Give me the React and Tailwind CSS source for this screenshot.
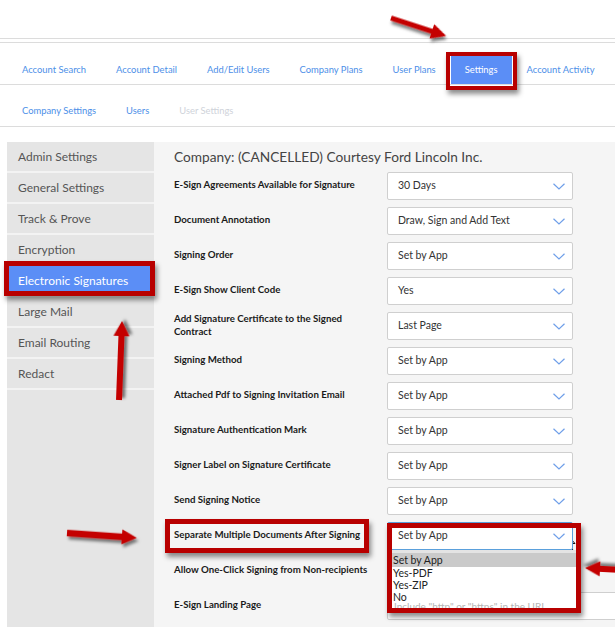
import React from 'react';

const tabs = ['Account Search', 'Account Detail', 'Add/Edit Users', 'Company Plans', 'User Plans', 'Settings', 'Account Activity'];

const sideItems = ['Admin Settings', 'General Settings', 'Track & Prove', 'Encryption', 'Electronic Signatures', 'Large Mail', 'Email Routing', 'Redact'];

const rows = [
    { label: 'E-Sign Agreements Available for Signature', value: '30 Days' },
    { label: 'Document Annotation', value: 'Draw, Sign and Add Text' },
    { label: 'Signing Order', value: 'Set by App' },
    { label: 'E-Sign Show Client Code', value: 'Yes' },
    { label: 'Add Signature Certificate to the Signed Contract', value: 'Last Page' },
    { label: 'Signing Method', value: 'Set by App' },
    { label: 'Attached Pdf to Signing Invitation Email', value: 'Set by App' },
    { label: 'Signature Authentication Mark', value: 'Set by App' },
    { label: 'Signer Label on Signature Certificate', value: 'Set by App' },
    { label: 'Send Signing Notice', value: 'Set by App' },
];

const Chevron = () => (
    <svg width="12" height="7" viewBox="0 0 12 7" fill="none">
        <path d="M0.5 0.8 L6 6 L11.5 0.8" stroke="#6f9fe9" strokeWidth="1.2" />
    </svg>
);

const SelectBox = ({ value, focused }) => (
    <div className={`w-[186px] h-[28px] shrink-0 bg-white rounded-[2px] border pl-[10px] pr-[7px] flex items-center justify-between text-[10.5px] text-[#333] ${focused ? 'border-[#5aa0dc]' : 'border-[#cfcfcf]'}`}>
        <span>{value}</span>
        <Chevron />
    </div>
);

const Label = ({ children }) => (
    <div className="w-[213px] shrink-0 pr-[12px] pb-[3px] text-[9.7px] leading-[13px] font-bold text-[#1a1a1a]">{children}</div>
);

// arrow pointing along +x, drawn then rotated into place
const arrowPoints = (len, t, hw, hl) =>
    `0,${-t} ${len - hl},${-t} ${len - hl},${-hw} ${len},0 ${len - hl},${hw} ${len - hl},${t} 0,${t}`;

const Arrow = ({ x, y, angle, len, t = 3, hw = 8, hl = 15 }) => (
    <g transform={`translate(${x} ${y}) rotate(${angle})`} filter="url(#drop)">
        <polygon points={arrowPoints(len, t, hw, hl)} fill="#c40000" />
    </g>
);

const App = () => {
    return (
        <div className="relative w-[615px] h-[627px] overflow-hidden bg-white font-['Lato',sans-serif]">
            <div className="h-[39px] border-b border-[#dcdcdc]" />
            <div className="h-[4px] border-b border-[#dcdcdc]" />

            {/* main tabs */}
            <div className="h-[42px] border-b border-[#dcdcdc] flex items-end px-[7px] whitespace-nowrap">
                {tabs.map(tab =>
                    tab === 'Settings' ? (
                        <div key={tab} className="relative h-[28px] px-[14px] flex items-center text-[9.4px] text-white bg-[#5b8ef6]">
                            {tab}
                            <span className="absolute -left-[5px] -right-[5px] -top-[4px] -bottom-[6px] border-[4px] border-[#b80000] shadow-[2px_4px_5px_rgba(0,0,0,0.45)]" />
                        </div>
                    ) : (
                        <div key={tab} className="h-[28px] px-[15px] flex items-center text-[9.4px] text-[#4d8fe8]">
                            {tab}
                        </div>
                    )
                )}
            </div>

            {/* sub tabs */}
            <div className="h-[42px] border-b border-[#dcdcdc] flex items-end px-[7px] whitespace-nowrap">
                <div className="h-[29px] px-[15px] flex items-center text-[9.4px] text-[#4d8fe8]">Company Settings</div>
                <div className="h-[29px] px-[15px] flex items-center text-[9.4px] text-[#4d8fe8]">Users</div>
                <div className="h-[29px] px-[15px] flex items-center text-[9.4px] text-[#cfd3da]">User Settings</div>
            </div>

            <div className="h-[15px]" />

            <div className="flex pl-[7px] h-[486px]">
                {/* side menu */}
                <div className="w-[147px] shrink-0 bg-[#e5e5e5]">
                    {sideItems.map(item =>
                        item === 'Electronic Signatures' ? (
                            <div key={item} className="relative h-[31px] pl-[11px] flex items-center text-[12px] text-white bg-[#5b8ef6] border-b-2 border-[#f3f3f3]">
                                {item}
                                <span className="absolute -left-[3px] -right-[1px] -top-[5px] -bottom-[1px] border-[5px] border-[#b80000] shadow-[2px_4px_5px_rgba(0,0,0,0.45)]" />
                            </div>
                        ) : (
                            <div key={item} className="h-[31px] pl-[11px] flex items-center text-[12px] text-[#555] border-b-2 border-[#f3f3f3]">
                                {item}
                            </div>
                        )
                    )}
                </div>

                {/* settings form */}
                <div className="flex-1 bg-[#f5f5f5] pl-[20px] pt-[6px]">
                    <h2 className="text-[13.7px] leading-[18px] text-[#444] mb-[6px] whitespace-nowrap">Company: (CANCELLED) Courtesy Ford Lincoln Inc.</h2>

                    {rows.map(row => (
                        <div key={row.label} className="flex items-center h-[28px] mb-[7px]">
                            <Label>{row.label}</Label>
                            <SelectBox value={row.value} />
                        </div>
                    ))}

                    <div className="relative flex items-center h-[28px] mb-[7px]">
                        <Label>Separate Multiple Documents After Signing</Label>
                        <span className="absolute -left-[9px] -top-[3px] w-[204px] h-[34px] border-[5px] border-[#b80000] shadow-[2px_4px_5px_rgba(0,0,0,0.45)]" />
                        <div className="relative z-10">
                            <SelectBox value="Set by App" focused />
                            <div className="absolute left-[1px] top-full w-[188px] bg-white text-[10.5px] text-[#222]">
                                <div className="h-[3px] bg-[#e4e4e4]" />
                                <div className="h-[14px] leading-[14px] pl-[5px] bg-[#cacaca]">Set by App</div>
                                <div className="h-[12px] leading-[12px] pl-[5px]">Yes-PDF</div>
                                <div className="h-[12px] leading-[12px] pl-[5px]">Yes-ZIP</div>
                                <div className="h-[12px] leading-[12px] pl-[5px]">No</div>
                            </div>
                            <span className="absolute left-0 top-[1px] w-[194px] h-[90px] border-[5px] border-[#b80000] shadow-[2px_4px_5px_rgba(0,0,0,0.45)]" />
                        </div>
                    </div>

                    <div className="flex items-center h-[28px] mb-[7px]">
                        <Label>Allow One-Click Signing from Non-recipients</Label>
                        <SelectBox value="Set by App" />
                    </div>

                    <div className="flex items-center h-[28px]">
                        <Label>E-Sign Landing Page</Label>
                        <div className="w-[240px] h-[28px] shrink-0 bg-white border border-[#cfcfcf] rounded-[2px] pl-[6px] flex items-center text-[10px] text-[#b5b5b5]">
                            Include "http" or "https" in the URL
                        </div>
                    </div>
                </div>
            </div>

            {/* callout arrows and pointer */}
            <svg className="absolute inset-0 pointer-events-none" width="615" height="627">
                <defs>
                    <filter id="drop" x="-20%" y="-50%" width="140%" height="200%">
                        <feDropShadow dx="2" dy="3" stdDeviation="1.8" floodColor="#000" floodOpacity="0.5" />
                    </filter>
                </defs>
                <Arrow x={391} y={18} angle={18} len={58} t={2.6} hw={7.5} hl={15} />
                <Arrow x={119} y={400} angle={-87.8} len={79} t={3} hw={8} hl={15} />
                <Arrow x={67} y={533} angle={4} len={70} t={3.2} hw={7.5} hl={15} />
                <Arrow x={622} y={570} angle={183} len={37} t={3} hw={7.5} hl={15} />
                <path d="M563.5 531 L563.5 548 L567.5 544.5 L570.5 551.5 L573 550.5 L570 543.5 L575 543.5 Z" fill="#fff" stroke="#111" strokeWidth="1" strokeLinejoin="round" />
            </svg>
        </div>
    );
};

export default App;
